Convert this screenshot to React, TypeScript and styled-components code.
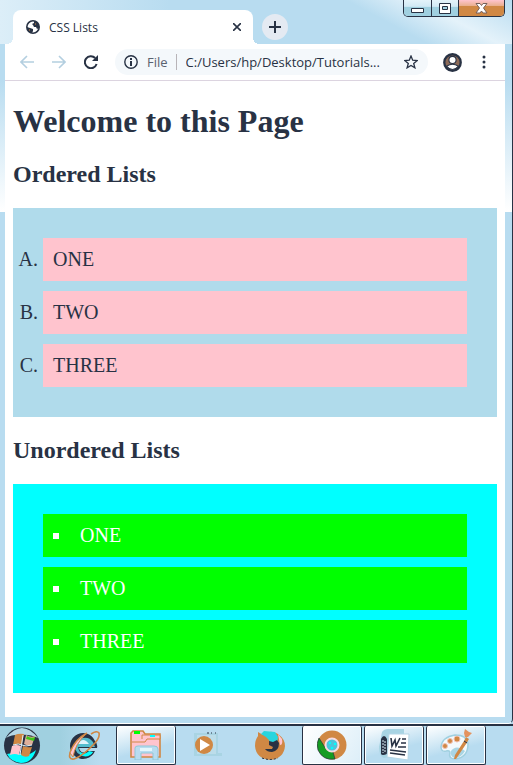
import React from "react";
import styled, { createGlobalStyle } from "styled-components";

const c = {
  ink: "#283244",
  sky: "#b8dcf0",
  teal: "#a0d0e0",
  orange: "#d08844",
  pink: "#ffc4ce",
  cyan: "#00ffff",
  lime: "#00ff00",
};

const GlobalStyle = createGlobalStyle`
  *, *::before, *::after { box-sizing: border-box; }
  body { margin: 0; background: ${c.sky}; color: ${c.ink}; }
  button, input { font: inherit; color: inherit; }
`;

const Desktop = styled.div`
  min-height: 100vh;
  display: flex;
  flex-direction: column;
  font-family: "Open Sans", "Noto Sans", sans-serif;
  font-size: 13px;
`;

const BrowserWindow = styled.section`
  flex: 1;
  display: flex;
  flex-direction: column;
  padding: 0 7px 6px 5px;
  border-right: 1px solid ${c.ink};
  border-bottom: 1px solid #fff;
  border-bottom-right-radius: 5px;
  background:
    linear-gradient(${c.sky} 80px, #fff 212px, ${c.sky} 212px);
`;

const TitleBar = styled.header`
  display: flex;
  align-items: flex-end;
  height: 44px;
  margin: 0 -7px 0 -5px;
  padding: 0 7px 0 13px;
  background:
    linear-gradient(28deg, transparent 72%, #e4f2fa 84%, ${c.sky} 100%),
    linear-gradient(90deg, #dceef8, ${c.sky} 170px);
`;

const Tab = styled.div`
  position: relative;
  display: flex;
  align-items: center;
  gap: 9px;
  flex: 0 1 240px;
  height: 34px;
  padding: 0 10px 0 13px;
  border-radius: 8px 8px 0 0;
  background: #fff;
  font-size: 12px;
  &::before, &::after {
    content: "";
    position: absolute;
    bottom: 0;
    width: 6px;
    height: 6px;
  }
  &::before { left: -6px; background: radial-gradient(circle at 0 0, transparent 6px, #fff 6px); }
  &::after { right: -6px; background: radial-gradient(circle at 100% 0, transparent 6px, #fff 6px); }
`;

const TabTitle = styled.span`
  flex: 1;
`;

const IconButton = styled.button<{ $size?: number }>`
  display: grid;
  place-items: center;
  flex: none;
  width: ${(p) => p.$size ?? 20}px;
  height: ${(p) => p.$size ?? 20}px;
  padding: 0;
  border: 0;
  border-radius: 50%;
  background: none;
`;

const NewTab = styled(IconButton)`
  margin: 0 0 4px 9px;
  background: #e4eaf2;
`;

const Caption = styled.div`
  display: flex;
  align-self: flex-start;
  height: 17px;
  margin-left: auto;
  border: 1px solid ${c.ink};
  border-top: 0;
  border-radius: 0 0 5px 5px;
  overflow: hidden;
`;

const CaptionButton = styled.button<{ $close?: boolean }>`
  display: grid;
  place-items: center;
  width: ${(p) => (p.$close ? 46 : 27)}px;
  padding: 0;
  border: 0;
  border-left: ${(p) => (p.$close ? `1px solid ${c.ink}` : "0")};
  background: ${(p) =>
    p.$close
      ? `linear-gradient(${c.pink}, #eab090 35%, ${c.orange} 40%)`
      : `linear-gradient(#e4f3fa, #d2eaf5 40%, ${c.teal} 45%)`};
  & + & { border-left: 1px solid ${c.ink}; }
`;

const Toolbar = styled.nav`
  display: flex;
  align-items: center;
  height: 37px;
  padding: 0 12px;
  background: #fff;
  border-bottom: 1px solid #dcd4e0;
`;

const NavGroup = styled.div`
  display: flex;
  gap: 12px;
`;

const AddressBar = styled.label`
  display: flex;
  align-items: center;
  flex: 1;
  min-width: 0;
  height: 26px;
  margin: 0 14px;
  padding: 0 10px 0 9px;
  border-radius: 13px;
  background: #f4f8fb;
`;

const Scheme = styled.span`
  margin-left: 9px;
  padding-right: 8px;
  border-right: 1px solid #b8b4b8;
  line-height: 16px;
  color: #5a6270;
`;

const AddressInput = styled.input`
  flex: 1;
  min-width: 0;
  padding: 0 0 0 9px;
  border: 0;
  background: none;
`;

const PageTools = styled.div`
  display: flex;
  gap: 12px;
  margin-right: -1px;
`;

const Page = styled.main`
  flex: 1;
  padding: 8px;
  background: #fff;
  font-family: "Liberation Serif", "Times New Roman", serif;
  font-size: 20px;
  line-height: 23px;
`;

const Title = styled.h1`
  margin: 14px 0 21px;
  font-size: 32px;
  line-height: 37px;
`;

const Heading = styled.h2`
  margin: 20px 0;
  font-size: 24px;
  line-height: 27px;
`;

const OrderedList = styled.ol`
  display: grid;
  gap: 10px;
  margin: 0;
  padding: 30px;
  list-style: upper-alpha;
  background: #b0dbeb;
`;

const UnorderedList = styled.ul`
  display: grid;
  gap: 10px;
  margin: 0;
  padding: 30px;
  list-style: square inside;
  background: ${c.cyan};
  color: #fff;
`;

const Item = styled.li<{ $fill: string }>`
  padding: 10px;
  background: ${(p) => p.$fill};
`;

const Taskbar = styled.footer`
  display: flex;
  gap: 2px;
  height: 41px;
  border-top: 2px solid ${c.ink};
  background: linear-gradient(90deg, ${c.teal} 60px, ${c.sky} 100px);
`;

const StartButton = styled.button`
  width: 52px;
  padding: 0 0 0 3px;
  border: 0;
  background: none;
  text-align: left;
`;

const TaskButton = styled.button<{ $open?: boolean; $active?: boolean }>`
  display: grid;
  place-items: center;
  width: 60px;
  height: 39px;
  padding: 0;
  border: 1px solid ${(p) => (p.$open ? c.ink : "transparent")};
  border-top: 0;
  border-radius: 2px;
  box-shadow: ${(p) => (p.$open ? "inset 0 0 0 1px #fff" : "none")};
  background: ${(p) =>
    p.$active
      ? "linear-gradient(120deg, #fff, #dceef8)"
      : p.$open
        ? `linear-gradient(165deg, #fff, ${c.sky} 60%)`
        : "none"};
`;

const Glyph = styled.svg`
  display: block;
`;

const line = { fill: "none", stroke: "currentColor", strokeWidth: 2 };

const Globe = () => (
  <Glyph width="14" height="14" viewBox="0 0 14 14">
    <circle cx="7" cy="7" r="6.2" fill="#fff" stroke={c.ink} strokeWidth="1.6" />
    <path d="M8 1l3 1 2 3v3l-2 1-1-2H8L7 5 6 4l2-1zM1 7l3 1 3 1v2l-1 2-3-1-2-3z" fill={c.ink} />
    <path d="M9 4h1M3 10h1" stroke={c.orange} />
  </Glyph>
);

const Arrow = ({ back = false }: { back?: boolean }) => (
  <Glyph width="14" height="14" viewBox="0 0 14 14" color="#b4cfe0">
    <path d={back ? "M14 7H1M7 1 1 7l6 6" : "M0 7h13M7 1l6 6-6 6"} {...line} strokeWidth={1.6} />
  </Glyph>
);

const Reload = () => (
  <Glyph width="14" height="14" viewBox="0 0 14 14">
    <path d="M11.2 3A6 6 0 1 0 12.6 9" {...line} />
    <path d="M14 0v6H8z" fill={c.ink} />
  </Glyph>
);

const Info = () => (
  <Glyph width="14" height="14" viewBox="0 0 14 14">
    <circle cx="7" cy="7" r="6.2" {...line} strokeWidth={1.4} />
    <path d="M6 3h2v2H6zM6 6h2v5H6z" fill={c.ink} />
  </Glyph>
);

const Star = () => (
  <Glyph width="14" height="14" viewBox="0 0 14 14">
    <path d="m7 1 1.7 4.2 4.5.3-3.5 2.9 1.2 4.4L7 10.4l-3.9 2.4 1.2-4.4L.8 5.500l4.500-.3z" {...line} strokeWidth={1.3} />
  </Glyph>
);

const Person = () => (
  <Glyph width="19" height="19" viewBox="0 0 18 18">
    <circle cx="9" cy="9" r="7.8" fill="#8c6a58" stroke={c.ink} strokeWidth="2.2" />
    <circle cx="9" cy="6.6" r="3.4" fill="#fff" stroke={c.ink} />
    <path d="M3.4 12.600Q9 8.800 14.600 12.600 9 18.600 3.4 12.600z" fill="#fff" stroke={c.ink} />
  </Glyph>
);

const Orb = () => (
  <Glyph width="38" height="37" viewBox="0 0 38 37">
    <circle cx="19" cy="18.500" r="18" fill={c.ink} />
    <path d="M3 11Q19-9 35 11 26 7 19 8 10 7 3 11z" fill="#b5d7e5" />
    <path d="M4 27Q12 25 19 27t14-4Q29 36 18 36 8 35 4 27z" fill={c.cyan} />
    <path d="M12 8q4-2 9-1l-2 10q-5-1-9 1z" fill={c.orange} />
    <path d="M23 8q5 3 9 1l-3 9q-5 1-8-1z" fill="#dfb09b" />
    <path d="M24 9q4 3 8 1l-1 4-8-2z" fill="#3fc51b" />
    <path d="M9 19q4-2 9 0l-2 9q-4-2-9 0z" fill="#ffc4ce" />
    <path d="M20 19q4 2 9 1l-3 9q-4 2-8-1z" fill={c.orange} />
    <path d="M10 18q6-2 9 0t10 0M20 8l-3 20" stroke="#e1f2fb" fill="none" />
  </Glyph>
);

const Explorer = () => (
  <Glyph width="32" height="30" viewBox="0 0 32 30">
    <path d="M27 11A13 13 0 1 0 27 21H19q-6 4-8-3h18q1-4-2-7zM11 14q3-7 9 0z" fill={c.ink} />
    <path d="M25 12A10 10 0 0 0 7 16q0 9 10 10 6 0 8-4h-5q-8 5-10-5h17z" fill="#54bccd" />
    <path d="M10 14q5-8 11 0z" fill="#e1f4fb" />
    <path d="M12 22q6 4 9-1l4 1q-5 7-13 3z" fill={c.cyan} />
    <path d="M23 4q6-4 8-1 1 4-4 10Q15 26 6 29q-7 1-3-9Q8 9 19 3" fill="none" stroke={c.orange} strokeWidth="1.6" />
    <path d="M2 23Q7 10 18 4 7 14 5 27z" fill={c.pink} stroke={c.orange} />
  </Glyph>
);

const Folder = () => (
  <Glyph width="32" height="30" viewBox="0 0 32 30">
    <path d="M1 27V3l2-2h10l2 3h15v23z" fill={c.pink} stroke={c.orange} strokeWidth="1.6" />
    <path d="M4 1h6v3H4z" fill={c.lime} />
    <path d="M12 9V5h18v4H17l-2 3H2" fill={c.pink} stroke={c.orange} />
    <path d="M20 5h5v2h-5z" fill={c.cyan} />
    <path d="M5 30V18q0-2 3-2h16q4 0 4 3v11h-5v-7H11v7z" fill="#b8dcf0" stroke="#8dc9d8" />
    <path d="M10 18h12v3H10z" fill="#e4f7fc" />
  </Glyph>
);

const MediaPlayer = () => (
  <Glyph width="30" height="26" viewBox="0 0 30 26">
    <path d="M1 1h24v20h4v3H1z" fill="#a9d4e3" />
    <path d="M4 3h19v19H4z" fill="#bcddea" />
    <path d="M14 1h2M18 1h1M22 1h1" stroke={c.ink} />
    <circle cx="11" cy="13" r="9" fill={c.orange} />
    <path d="M7 7v12l10-6z" fill="#fff" />
  </Glyph>
);

const Firefox = () => (
  <Glyph width="30" height="30" viewBox="0 0 30 30">
    <path d="M3 6V2l5 3Q15-1 23 4q7 5 7 12-1 12-14 14Q1 29 0 16 0 10 3 6z" fill={c.orange} />
    <path d="M6 4 9 1l11 1 3 5-1 6-6 1-2-4-3-3z" fill="#27d5de" />
    <path d="M14 11l4 1 4-2 2 3q0 8-7 9-5 0-7-3l7 0 1-2-4-2z" fill={c.ink} />
    <path d="m23 4 4 5q1 6-2 6z" fill={c.pink} />
    <path d="M7 28q8 3 16 0" fill="none" stroke={c.ink} strokeDasharray="2 2" />
  </Glyph>
);

const Chrome = () => (
  <Glyph width="30" height="30" viewBox="0 0 30 30">
    <circle cx="15" cy="15" r="14.500" fill={c.orange} />
    <path d="M2 8 9 19l7 3 2 7Q6 31 1 20-1 13 2 8z" fill="#159c22" stroke={c.ink} strokeWidth=".7" />
    <circle cx="15" cy="15" r="6.500" fill="#4cc6db" stroke="#f8dce2" strokeWidth="2" />
    <path d="M12 12h2v2h-2zm5 1h2v2h-2zm-3 4h2v2h-2z" fill={c.cyan} />
  </Glyph>
);

const Word = () => (
  <Glyph width="31" height="32" viewBox="0 0 31 32">
    <path d="M3 3q2-3 6-3h16v25L5 29Q0 27 0 18z" fill="#a8d4e3" />
    <path d="M2 10q3-6 6 0v15q-5 2-6 0z" fill={c.ink} />
    <path d="M4 11v13M6 12v12" stroke="#dceff8" strokeDasharray="2 1" />
    <path d="M10 5h20l-1 26-21-3z" fill="#fff" stroke="#b5d6e6" />
    <path d="m12 9 1 8 3-6 1 6 4-8" fill="none" stroke={c.ink} strokeWidth="1.600" />
    <path d="M23 10h4m-5 4h5m-8 4h8M11 21l16 2m-16 1 15 2" stroke={c.ink} strokeWidth="1.600" />
  </Glyph>
);

const Paint = () => (
  <Glyph width="32" height="32" viewBox="0 0 32 32">
    <path d="M1 18Q2 8 15 6q12 0 13 9 0 13-12 15-8 0-6-6 0-3-4-2-5 1-5-4z" fill="#f3fafd" stroke={c.teal} strokeWidth="1.500" />
    <path d="M11 22q5-7 14 0-4 7-10 7-5-1-4-7z" fill="#a9d5e4" />
    <g fill={c.orange} stroke="#f1c2b5">
      <circle cx="5" cy="17" r="2.500" />
      <circle cx="10" cy="12" r="2.500" />
      <circle cx="17" cy="10" r="3" />
    </g>
    <path d="m24 12 2-4 3 2-3 5-10 15h-2l1-4z" fill={c.orange} />
    <path d="m24 4 1-4 4 3 3 1-4 4h-3z" fill="#e4935f" />
    <path d="m24 12 3 2" stroke={c.ink} />
  </Glyph>
);

const words = ["ONE", "TWO", "THREE"];

const tasks = [
  { name: "Internet Explorer", icon: <Explorer /> },
  { name: "File Explorer", icon: <Folder />, open: true },
  { name: "Media Player", icon: <MediaPlayer /> },
  { name: "Firefox", icon: <Firefox /> },
  { name: "Chrome", icon: <Chrome />, open: true, active: true },
  { name: "Word", icon: <Word />, open: true },
  { name: "Paint", icon: <Paint />, open: true },
];

export default function App() {
  return (
    <Desktop>
      <GlobalStyle />
      <BrowserWindow>
        <TitleBar>
          <Tab>
            <Globe />
            <TabTitle>CSS Lists</TabTitle>
            <IconButton $size={12} aria-label="Close tab">
              <Glyph width="8" height="8" viewBox="0 0 8 8">
                <path d="m0 0 8 8m0-8L0 8" {...line} strokeWidth={1.6} />
              </Glyph>
            </IconButton>
          </Tab>
          <NewTab $size={26} aria-label="New tab">
            <Glyph width="12" height="12" viewBox="0 0 12 12">
              <path d="M6 0v12M0 6h12" {...line} />
            </Glyph>
          </NewTab>
          <Caption>
            <CaptionButton aria-label="Minimize">
              <Glyph width="13" height="11" viewBox="0 0 13 11">
                <path d="M.5 5.500h12v4H.5z" fill="#fff" stroke={c.ink} />
              </Glyph>
            </CaptionButton>
            <CaptionButton aria-label="Maximize">
              <Glyph width="12" height="11" viewBox="0 0 12 11">
                <path d="M.5.5h11v10H.5z" fill="#fff" stroke={c.ink} />
                <path d="M3.500 3.500h5v3h-5z" fill={c.teal} stroke={c.ink} />
              </Glyph>
            </CaptionButton>
            <CaptionButton $close aria-label="Close">
              <Glyph width="13" height="11" viewBox="0 0 13 11">
                <path d="M1 .5h4l1.500 2L8 .5h4L8.500 5l3.500 5H8L6.500 8 5 10H1l3.500-5z" fill="#fff" stroke="#76605b" />
              </Glyph>
            </CaptionButton>
          </Caption>
        </TitleBar>
        <Toolbar>
          <NavGroup>
            <IconButton aria-label="Back"><Arrow back /></IconButton>
            <IconButton aria-label="Forward"><Arrow /></IconButton>
            <IconButton aria-label="Reload"><Reload /></IconButton>
          </NavGroup>
          <AddressBar>
            <Info />
            <Scheme>File</Scheme>
            <AddressInput aria-label="Address" defaultValue="C:/Users/hp/Desktop/Tutorials..." />
            <IconButton $size={14} aria-label="Bookmark"><Star /></IconButton>
          </AddressBar>
          <PageTools>
            <IconButton aria-label="Profile"><Person /></IconButton>
            <IconButton aria-label="Menu">
              <Glyph width="4" height="14" viewBox="0 0 4 14" fill={c.ink}>
                <circle cx="2" cy="2" r="1.500" />
                <circle cx="2" cy="7" r="1.500" />
                <circle cx="2" cy="12" r="1.500" />
              </Glyph>
            </IconButton>
          </PageTools>
        </Toolbar>
        <Page>
          <Title>Welcome to this Page</Title>
          <Heading>Ordered Lists</Heading>
          <OrderedList>
            {words.map((w) => <Item key={w} $fill={c.pink}>{w}</Item>)}
          </OrderedList>
          <Heading>Unordered Lists</Heading>
          <UnorderedList>
            {words.map((w) => <Item key={w} $fill={c.lime}>{w}</Item>)}
          </UnorderedList>
        </Page>
      </BrowserWindow>
      <Taskbar>
        <StartButton aria-label="Start"><Orb /></StartButton>
        {tasks.map((t) => (
          <TaskButton key={t.name} aria-label={t.name} $open={t.open} $active={t.active}>
            {t.icon}
          </TaskButton>
        ))}
      </Taskbar>
    </Desktop>
  );
}
